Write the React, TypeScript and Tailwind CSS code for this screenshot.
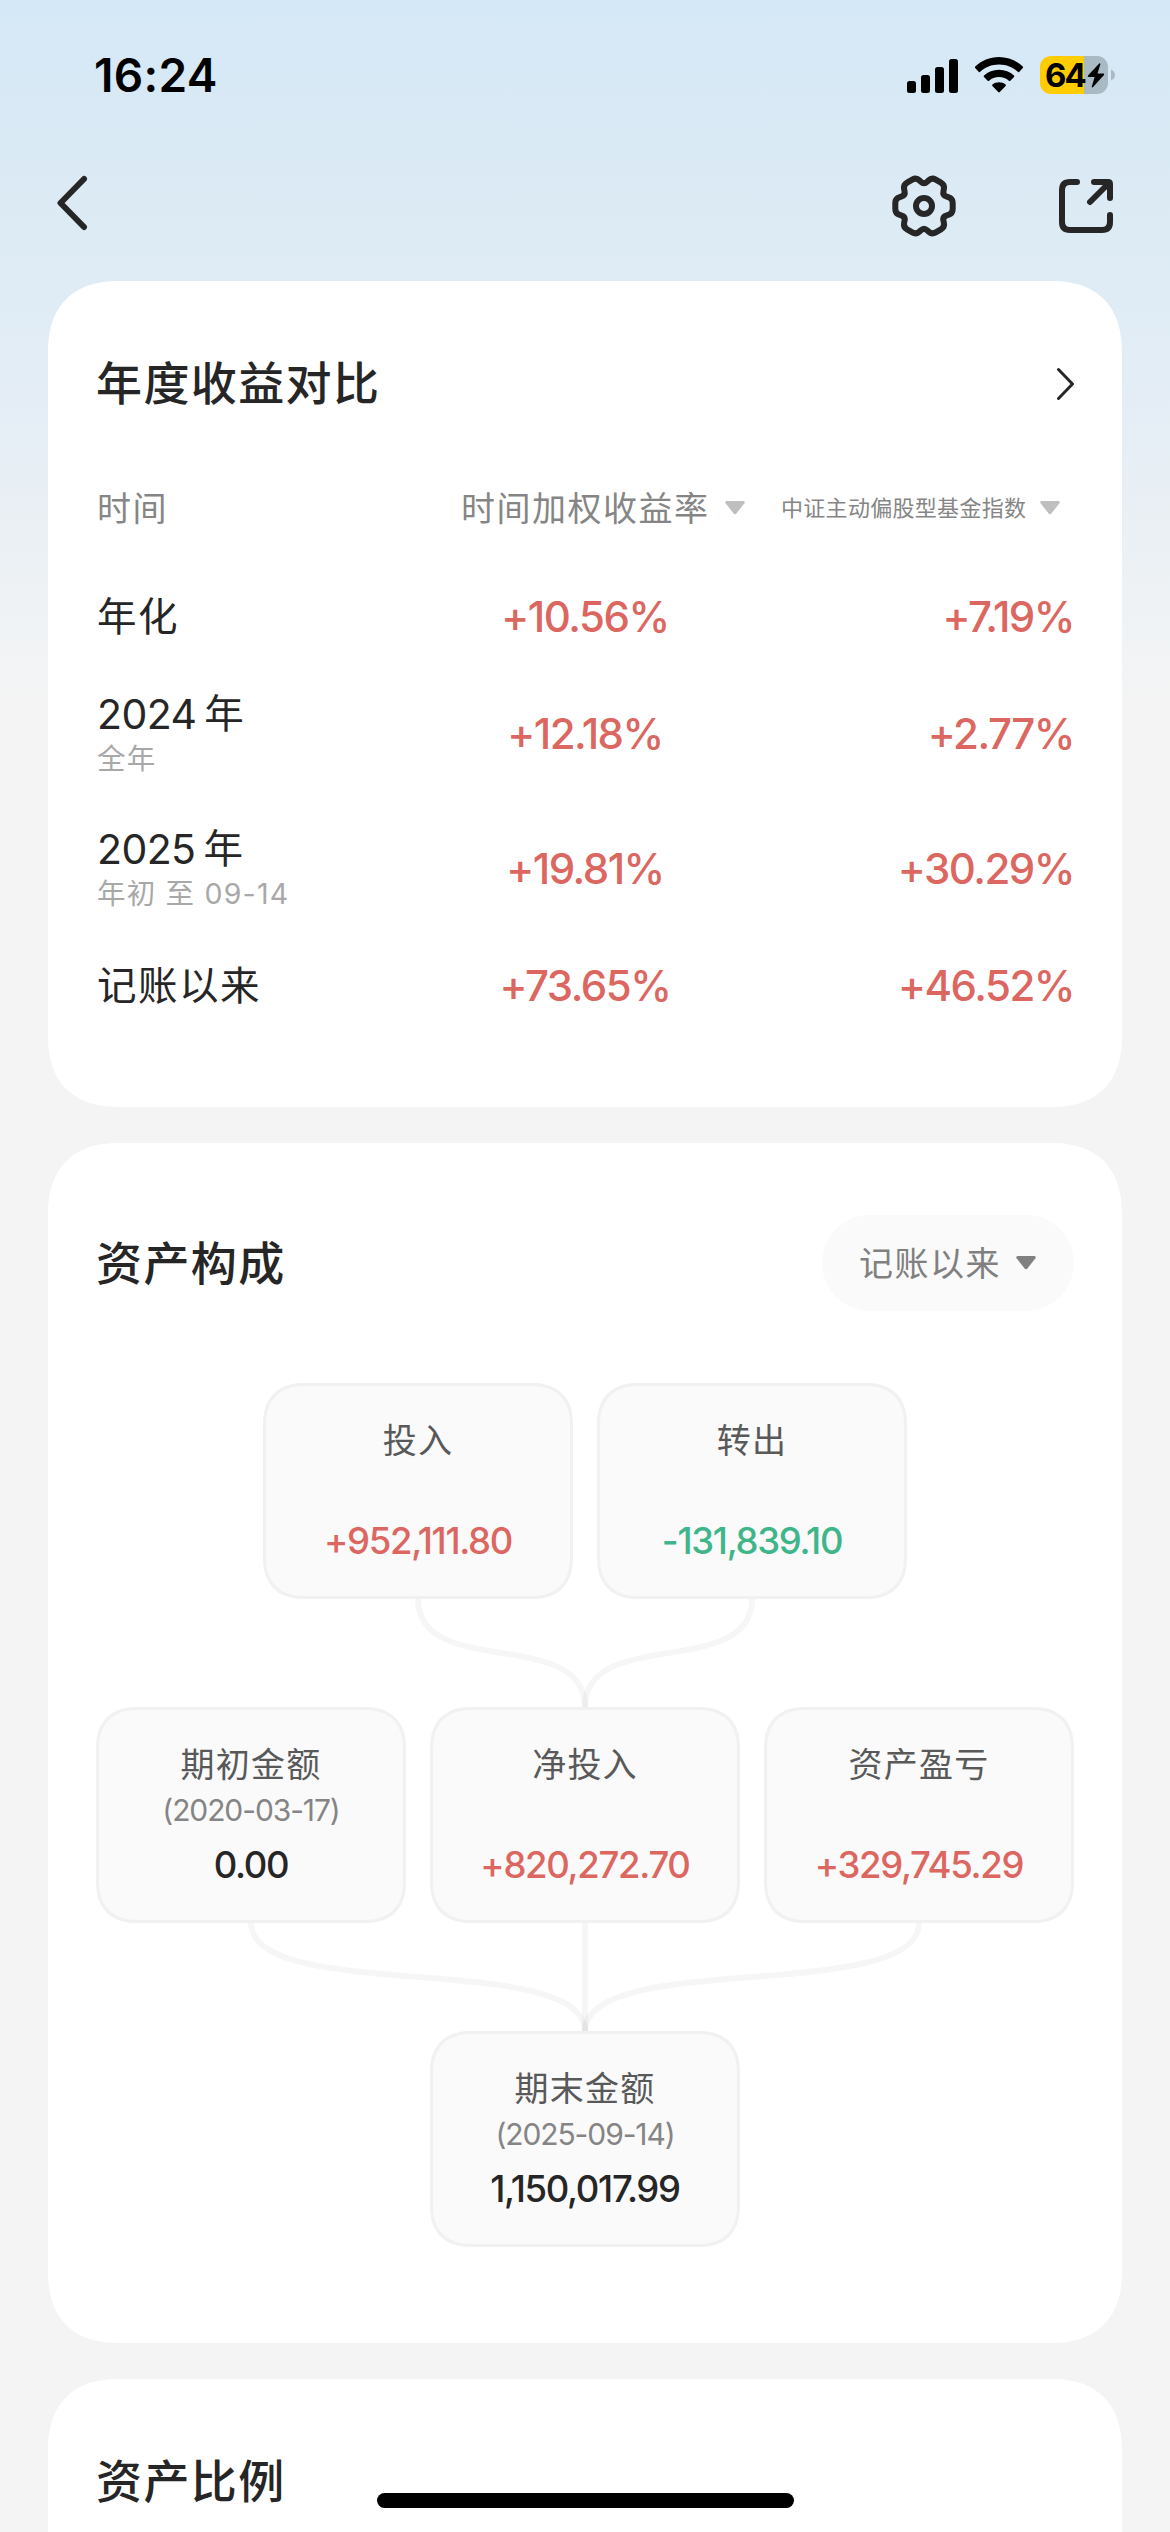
import clsx from 'clsx';

type Tone = 'up' | 'down' | 'plain';

interface YearRow {
  label: string;
  year?: string;
  note?: string;
  rate: string;
  index: string;
}

const rows: YearRow[] = [
  { label: '年化', rate: '+10.56%', index: '+7.19%' },
  { year: '2024', label: '年', note: '全年', rate: '+12.18%', index: '+2.77%' },
  { year: '2025', label: '年', note: '年初 至 09-14', rate: '+19.81%', index: '+30.29%' },
  { label: '记账以来', rate: '+73.65%', index: '+46.52%' },
];

export default function App() {
  return (
    <div className="w-[1170px] h-[2532px] relative overflow-hidden flex flex-col bg-[linear-gradient(180deg,#d5e8f7_0px,#dbeaf4_180px,#dfecf5_280px,#e4edf6_400px,#e9eff4_500px,#eef2f5_600px,#f4f4f4_710px)] font-['Inter','Noto_Sans_CJK_SC',sans-serif] text-[#262626]">
      <StatusBar />
      <NavBar />
      <main className="flex flex-col gap-9 px-12">
        <YearlyCard />
        <AssetCard />
        <Card className="h-[400px] pt-[68px]">
          <CardTitle>资产比例</CardTitle>
        </Card>
      </main>
      {/* Home indicator */}
      <div className="absolute left-[377px] top-[2493px] w-[417px] h-[15px] rounded-full bg-black" />
    </div>
  );
}

// ── Status bar ──
function StatusBar() {
  return (
    <div className="h-[148px] shrink-0 flex items-start justify-between pl-[94px] pr-[55px] pt-[50px] text-black">
      <span className="text-[46px] leading-[50px] font-semibold tracking-[0.3px]">16:24</span>
      <div className="flex items-center h-[50px]">
        <svg width="51" height="36" viewBox="0 0 51 36" fill="currentColor">
          <rect x="0" y="24" width="9" height="12" rx="2.5" />
          <rect x="14" y="18" width="9" height="18" rx="2.5" />
          <rect x="28" y="10" width="9" height="26" rx="2.5" />
          <rect x="42" y="2" width="9" height="34" rx="2.5" />
        </svg>
        <svg className="ml-[17px]" width="48" height="36" viewBox="0 0 48 36" fill="currentColor">
          <path d="M24 0C33.2 0 41.6 3.6 47.8 9.6Q48.4 10.3 47.8 11L44.4 14.8Q43.7 15.5 43 14.9C37.9 10.1 31.3 7.4 24 7.4S10.1 10.1 5 14.9Q4.3 15.5 3.6 14.8L.2 11Q-.4 10.3.2 9.6C6.4 3.6 14.8 0 24 0Z" />
          <path d="M24 12.8C29.8 12.8 35 15 39 18.5Q39.7 19.2 39 19.9L35.3 23.7Q34.6 24.3 33.9 23.7C31.2 21.4 27.8 20.1 24 20.1S16.8 21.4 14.1 23.7Q13.4 24.3 12.7 23.7L9 19.9Q8.3 19.2 9 18.5C13 15 18.2 12.8 24 12.8Z" />
          <path d="M24 25.2C26.5 25.2 28.8 26.1 30.6 27.5Q31.3 28.2 30.6 28.9L24.8 35Q24 35.8 23.2 35L17.4 28.9Q16.7 28.2 17.4 27.5C19.2 26.1 21.5 25.2 24 25.2Z" />
        </svg>
        <div className="ml-[17px] w-[68px] h-[38px] rounded-[11px] flex items-center pl-[5px] bg-[linear-gradient(90deg,#ffcc00_44px,#aabac5_44px)]">
          <span className="w-[42px] text-[33px] leading-[38px] font-bold tracking-[-2px]">64</span>
          <svg width="18" height="25" viewBox="0 0 18 25" fill="currentColor">
            <path d="M12.2.5 1 12.6Q.1 14 1.6 14H7.6L4.8 23.6Q4.7 25 5.9 24.3L17 12Q17.8 10.7 16.4 10.5H10.5L13.4 1.3Q13.5 0 12.2.5Z" />
          </svg>
        </div>
        <svg className="ml-[3px]" width="4" height="12" viewBox="0 0 4 12" fill="#aabac5">
          <path d="M0 0.5C2.5 1.5 4 3.5 4 6S2.5 10.5 0 11.5Z" />
        </svg>
      </div>
    </div>
  );
}

// ── Top navigation ──
function NavBar() {
  return (
    <div className="h-[133px] shrink-0 flex items-start pl-[57px] pr-[57px] pt-[27px] text-[#262626]">
      <svg width="31" height="56" viewBox="0 0 31 56" fill="none" stroke="currentColor" strokeWidth="6" strokeLinecap="round" strokeLinejoin="round">
        <path d="M27 4 3.5 28 27 52" />
      </svg>
      <div className="flex-1" />
      <svg className="mt-px mr-[103px] overflow-visible" width="64" height="60" viewBox="-32 -30 64 60" fill="none" stroke="currentColor" strokeWidth="6" strokeLinejoin="round">
        <path d={gearPath} />
        <circle r="8" />
      </svg>
      <svg className="mt-[4px]" width="54" height="54" viewBox="0 0 54 54" fill="none" stroke="currentColor" strokeWidth="6" strokeLinecap="round" strokeLinejoin="round">
        <path d="M18 3H11Q3 3 3 11V43Q3 51 11 51H43Q51 51 51 43V36" />
        <path d="M35 3H49Q51 3 51 5V19M50 4 31 23" />
      </svg>
    </div>
  );
}

// Six-lobed gear: two corners per lobe, one valley between lobes, all rounded
function buildGear() {
  const pts: [number, number][] = [];
  for (let k = 0; k < 6; k++) {
    const a = (k * Math.PI) / 3;
    const at = (u: number, v: number): [number, number] => [
      u * Math.cos(a) - v * Math.sin(a),
      u * Math.sin(a) + v * Math.cos(a),
    ];
    pts.push(at(28.7, -7.6), at(28.7, 7.6), at(18.4, 10.62));
  }
  return pts
    .map((p, i) => {
      const prev = pts[(i + pts.length - 1) % pts.length];
      const next = pts[(i + 1) % pts.length];
      const toward = (q: [number, number]) => {
        const d = Math.hypot(q[0] - p[0], q[1] - p[1]);
        const t = Math.min(4.6 / d, 0.5);
        return `${(p[0] + (q[0] - p[0]) * t).toFixed(2)} ${(p[1] + (q[1] - p[1]) * t).toFixed(2)}`;
      };
      return `${i === 0 ? 'M' : 'L'}${toward(prev)}Q${p[0].toFixed(2)} ${p[1].toFixed(2)} ${toward(next)}`;
    })
    .join('') + 'Z';
}

const gearPath = buildGear();

// ── Cards ──
function Card({ className, children }: { className?: string; children: React.ReactNode }) {
  return (
    <section className={clsx('shrink-0 bg-white rounded-[72px] [corner-shape:superellipse(1.25)] px-12', className)}>
      {children}
    </section>
  );
}

function CardTitle({ children }: { children: React.ReactNode }) {
  return <h2 className="text-[46px] leading-[68px] font-medium tracking-[1.4px]">{children}</h2>;
}

function Caret({ className }: { className?: string }) {
  return (
    <svg className={clsx('shrink-0', className)} width="20" height="14" viewBox="0 0 20 14" fill="currentColor">
      <path d="M1.6 0H18.4Q20.6.4 19.4 2.2L11.4 12.6Q10 14 8.6 12.6L.6 2.2Q-.6.4 1.6 0Z" />
    </svg>
  );
}

function YearlyCard() {
  return (
    <Card className="h-[826px] pt-[68px]">
      <div className="flex items-center justify-between">
        <CardTitle>年度收益对比</CardTitle>
        <svg width="19" height="33" viewBox="0 0 19 33" fill="none" stroke="currentColor" strokeWidth="3" strokeLinecap="round" strokeLinejoin="round">
          <path d="M3.5 2.5 17.5 17 3.5 31.5" />
        </svg>
      </div>

      <div className="mt-[41px] h-[100px] flex items-center text-[#858585]">
        <span className="w-[365px] pl-px text-[34px] tracking-[1.4px]">时间</span>
        <span className="w-[264px] text-[34px] tracking-[1.5px] whitespace-nowrap">时间加权收益率</span>
        <Caret className="text-[#bfbfbf]" />
        <span className="ml-[36px] w-[259px] text-[22px] tracking-[0.3px] whitespace-nowrap">中证主动偏股型基金指数</span>
        <Caret className="text-[#bfbfbf]" />
      </div>

      <div className="mt-[9px]">
        {rows.map((row) => (
          <div
            key={row.rate}
            className={clsx('grid grid-cols-3 items-center', row.note ? 'h-[135px]' : 'h-[99px]')}
          >
            <div className="pl-px">
              <div className="flex items-center text-[39.5px] leading-[50px] tracking-[1.5px]">
                {row.year && <span className="mr-[8px] text-[41px] tracking-[-0.6px]">{row.year}</span>}
                <span>{row.label}</span>
              </div>
              {row.note && (
                <div className="text-[28.5px] leading-[40px] tracking-[1.2px] text-[#a8a8a8]">{row.note}</div>
              )}
            </div>
            <RateText className="text-center">{row.rate}</RateText>
            <RateText className="text-right">{row.index}</RateText>
          </div>
        ))}
      </div>
    </Card>
  );
}

function RateText({ className, children }: { className?: string; children: string }) {
  return (
    <span className={clsx('text-[42px] leading-[50px] font-medium tracking-[-1.5px] text-[#dc6660]', className)}>
      {children}
    </span>
  );
}

// ── Asset composition ──
function AssetCard() {
  return (
    <Card className="h-[1200px] pt-[72px]">
      <div className="flex items-center justify-between">
        <CardTitle>资产构成</CardTitle>
        <button className="w-[252px] h-24 pl-[37px] flex items-center rounded-[48px] bg-[#fafafa] text-[#808080] text-[34px] tracking-[1.5px]">
          <span className="w-[157px] text-left">记账以来</span>
          <Caret />
        </button>
      </div>

      <div className="mt-[72px] flex flex-col items-center">
        <div className="flex gap-6">
          <Box label="投入" value="+952,111.80" tone="up" />
          <Box label="转出" value="-131,839.10" tone="down" />
        </div>
        <Links from={[322, 656]} />
        <div className="flex gap-6">
          <Box label="期初金额" date="(2020-03-17)" value="0.00" tone="plain" />
          <Box label="净投入" value="+820,272.70" tone="up" />
          <Box label="资产盈亏" value="+329,745.29" tone="up" />
        </div>
        <Links from={[155, 489, 823]} />
        <Box label="期末金额" date="(2025-09-14)" value="1,150,017.99" tone="plain" />
      </div>
    </Card>
  );
}

function Box({ label, date, value, tone }: { label: string; date?: string; value: string; tone: Tone }) {
  return (
    <div className="w-[310px] h-[216px] pt-[31px] flex flex-col items-center rounded-[42px] [corner-shape:superellipse(1.25)] border-[3px] border-[#f1f1f1] bg-[#fafafa]">
      <span className="text-[34px] leading-[48px] tracking-[1.2px] text-[#595959]">{label}</span>
      <span className="h-[42px] text-[30px] leading-[42px] tracking-[-1.1px] text-[#858585]">{date}</span>
      <span
        className={clsx(
          'mt-[10px] text-[36.5px] leading-[48px] font-medium tracking-[-1.3px]',
          tone === 'up' && 'text-[#dc6660]',
          tone === 'down' && 'text-[#3fb58a]',
          tone === 'plain' && 'text-[#262626]',
        )}
      >
        {value}
      </span>
    </div>
  );
}

// Curves that merge into the top centre of the next row
function Links({ from }: { from: number[] }) {
  return (
    <svg width="978" height="108" viewBox="0 0 978 108" fill="none" stroke="#000" strokeOpacity="0.035" strokeWidth="6">
      {from.map((x) => (
        <path key={x} d={`M${x} 0C${x} 81 489 27 489 108`} />
      ))}
    </svg>
  );
}
